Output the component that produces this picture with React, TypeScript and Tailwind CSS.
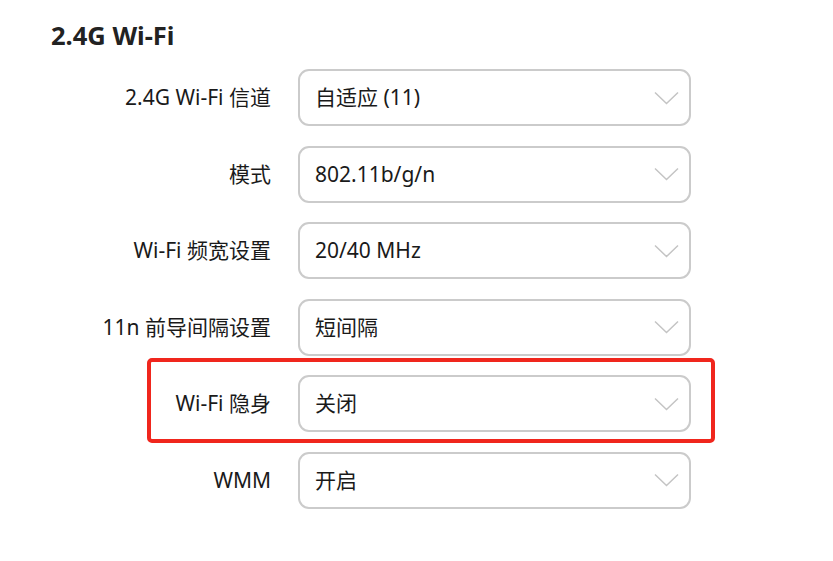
import React from "react";

const rows = [
  { label: "2.4G Wi-Fi 信道", value: "自适应 (11)" },
  { label: "模式", value: "802.11b/g/n" },
  { label: "Wi-Fi 频宽设置", value: "20/40 MHz" },
  { label: "11n 前导间隔设置", value: "短间隔" },
  { label: "Wi-Fi 隐身", value: "关闭", marked: true },
  { label: "WMM", value: "开启" },
];

const Chevron = () => (
  <svg width="25" height="14" viewBox="0 0 25 14" fill="none" className="shrink-0">
    <path d="M1 1.5 L12.5 12.5 L24 1.5" stroke="#c4c4c4" strokeWidth="1.5" />
  </svg>
);

const App = () => {
  return (
    <div
      className="w-[833px] h-[561px] overflow-hidden bg-white text-[#1a1a1a]"
      style={{ fontFamily: '"Noto Sans", "Noto Sans CJK SC", sans-serif' }}
    >
      <h2 className="pl-[51px] pt-[17px] text-[25.5px] font-bold leading-[36px] text-[#222]">
        2.4G Wi-Fi
      </h2>
      <div className="mt-[16px] flex flex-col gap-[19.6px]">
        {rows.map((row) => (
          <div key={row.label} className="relative flex items-center gap-[27px]">
            {row.marked && (
              <div className="absolute left-[147px] top-[-17px] w-[568px] h-[85px] rounded-[5px] border-[4px] border-[#f0261d]" />
            )}
            <div className="w-[271px] text-right text-[21px] leading-none">{row.label}</div>
            <div className="w-[393px] h-[57px] rounded-[11px] border-2 border-[#cbcbcb] flex items-center justify-between pl-[15px] pr-[10px]">
              <span className="text-[21px] leading-none">{row.value}</span>
              <Chevron />
            </div>
          </div>
        ))}
      </div>
      <h2 className="pl-[51px] mt-[44px] text-[25.5px] font-bold leading-[36px] text-[#222]">
        5G Wi-Fi
      </h2>
    </div>
  );
};

export default App;
